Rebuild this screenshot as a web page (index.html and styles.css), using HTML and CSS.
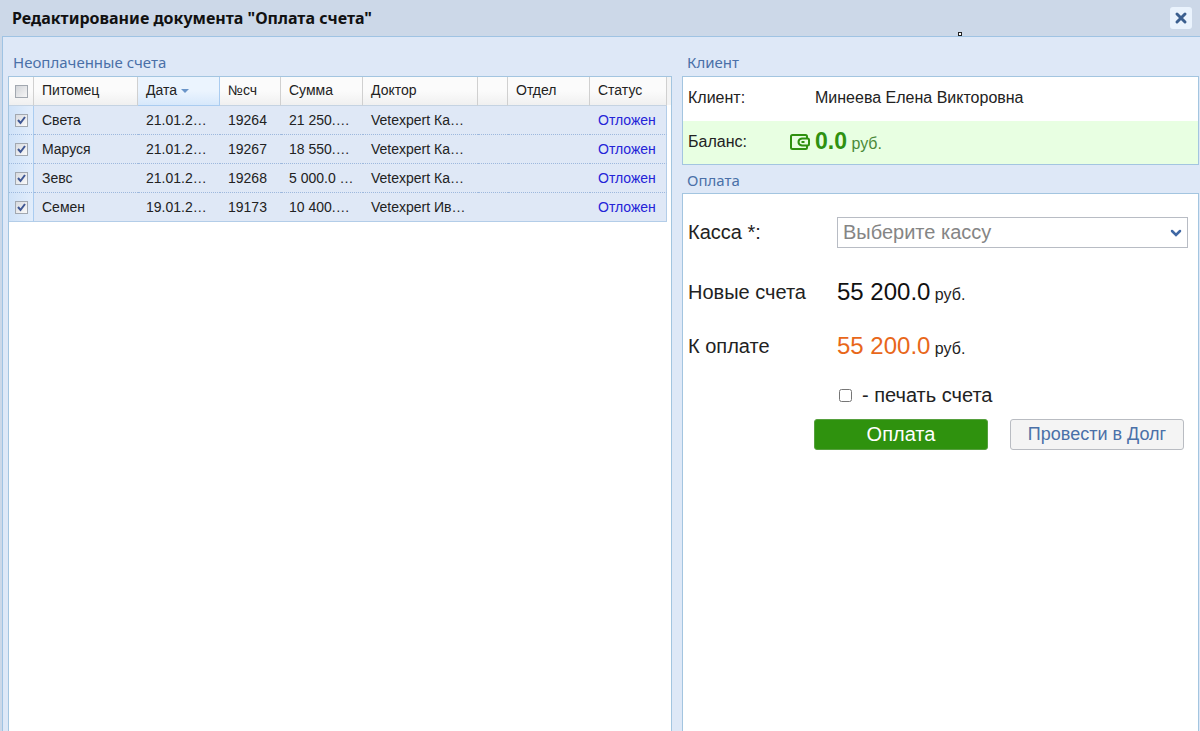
FILE: index.html
```html
<!DOCTYPE html>
<html lang="ru">

<head>
  <meta charset="UTF-8">
  <meta name="viewport" content="width=device-width, initial-scale=1.0">
  <title>Оплата счета</title>
  <link rel="stylesheet" href="styles.css">
</head>

<body>

  <div class="window">
    <header class="window-header">
      <h1>Редактирование документа "Оплата счета"</h1>
      <button class="close" type="button" aria-label="Закрыть">
        <svg width="14" height="14" viewBox="0 0 14 14"><path d="M3 3L11 11M11 3L3 11" stroke="#3b5f8f" stroke-width="3" stroke-linecap="round"/></svg>
      </button>
      <span class="marker"></span>
    </header>

    <main class="window-body">
      <!-- Неоплаченные счета -->
      <section class="column">
        <h2>Неоплаченные счета</h2>
        <div class="panel bills">
          <table>
            <thead>
              <tr>
                <th class="col-check"><input type="checkbox" class="check" aria-label="Выбрать все"></th>
                <th class="col-pet">Питомец</th>
                <th class="col-date sorted">Дата<svg width="8" height="4" viewBox="0 0 8 4"><path d="M0 0H8L4 4Z" fill="#6a95c9"/></svg></th>
                <th class="col-num">№сч</th>
                <th class="col-sum">Сумма</th>
                <th class="col-doctor">Доктор</th>
                <th class="col-empty"></th>
                <th class="col-dept">Отдел</th>
                <th class="col-status">Статус</th>
              </tr>
            </thead>
            <tbody>
              <tr>
                <td><input type="checkbox" class="check" aria-label="Света" checked></td>
                <td>Света</td>
                <td>21.01.2…</td>
                <td>19264</td>
                <td>21 250.…</td>
                <td>Vetexpert Ка…</td>
                <td></td>
                <td></td>
                <td class="status">Отложен</td>
              </tr>
              <tr>
                <td><input type="checkbox" class="check" aria-label="Маруся" checked></td>
                <td>Маруся</td>
                <td>21.01.2…</td>
                <td>19267</td>
                <td>18 550.…</td>
                <td>Vetexpert Ка…</td>
                <td></td>
                <td></td>
                <td class="status">Отложен</td>
              </tr>
              <tr>
                <td><input type="checkbox" class="check" aria-label="Зевс" checked></td>
                <td>Зевс</td>
                <td>21.01.2…</td>
                <td>19268</td>
                <td>5 000.0 …</td>
                <td>Vetexpert Ка…</td>
                <td></td>
                <td></td>
                <td class="status">Отложен</td>
              </tr>
              <tr>
                <td><input type="checkbox" class="check" aria-label="Семен" checked></td>
                <td>Семен</td>
                <td>19.01.2…</td>
                <td>19173</td>
                <td>10 400.…</td>
                <td>Vetexpert Ив…</td>
                <td></td>
                <td></td>
                <td class="status">Отложен</td>
              </tr>
            </tbody>
          </table>
        </div>
      </section>

      <section class="column">
        <!-- Клиент -->
        <h2>Клиент</h2>
        <div class="panel client">
          <div class="client-row">
            <span class="client-label">Клиент:</span>
            <span>Минеева Елена Викторовна</span>
          </div>
          <div class="client-row balance">
            <span class="client-label">Баланс:</span>
            <svg class="wallet" width="20" height="18" viewBox="0 0 20 18" fill="none" stroke="#2f9110" stroke-width="2">
              <path d="M17 5V3.500Q17 2 15.500 2H2.500Q1 2 1 3.500V14.500Q1 16 2.500 16H15.500Q17 16 17 14.500V13"/>
              <path d="M12 5.500H17.500Q19 5.500 19 7V11Q19 12.500 17.500 12.500H12Q8.500 12 8.500 9T12 5.500Z"/>
              <path d="M11.500 9H14.500"/>
            </svg>
            <span class="balance-sum"><b>0.0</b> руб.</span>
          </div>
        </div>

        <!-- Оплата -->
        <h2 class="pay-title">Оплата</h2>
        <form class="panel pay">
          <div class="pay-row cash">
            <label for="cash">Касса *:</label>
            <div class="select">
              <select id="cash">
                <option>Выберите кассу</option>
              </select>
              <svg width="12" height="8" viewBox="0 0 12 8"><path d="M2 2L6 6L10 2" fill="none" stroke="#4068a4" stroke-width="2.500" stroke-linecap="round"/></svg>
            </div>
          </div>
          <div class="pay-row">
            <span>Новые счета</span>
            <span class="amount"><span class="sum">55 200.0</span> руб.</span>
          </div>
          <div class="pay-row">
            <span>К оплате</span>
            <span class="amount"><span class="sum due">55 200.0</span> руб.</span>
          </div>
          <div class="print">
            <input type="checkbox" id="print">
            <label for="print">- печать счета</label>
          </div>
          <div class="actions">
            <button type="button" class="btn btn-pay">Оплата</button>
            <button type="button" class="btn btn-debt">Провести в Долг</button>
          </div>
        </form>
      </section>
    </main>
  </div>

</body>

</html>
```
FILE: styles.css
```css
* {
  box-sizing: border-box;
}

body {
  margin: 0;
  font-family: "Liberation Sans", Arial, sans-serif;
  font-size: 14px;
  color: #222;
  background-color: #ccd8e8;
}

.window {
  display: flex;
  flex-direction: column;
  min-height: 100vh;
  padding-left: 2px;
}

.window-header {
  position: relative;
  display: flex;
  align-items: center;
  justify-content: space-between;
  height: 36px;
  padding: 0 8px 0 10px;
}

h1,
h2 {
  margin: 0;
  font-family: "Noto Sans", Tahoma, sans-serif;
}

h1 {
  font-size: 16px;
  line-height: 32px;
  color: #111;
}

h2 {
  height: 39px;
  padding: 15px 5px 0;
  font-size: 15px;
  font-weight: normal;
  line-height: 20px;
  color: #4a70a8;
}

.close {
  display: flex;
  align-items: center;
  justify-content: center;
  width: 22px;
  height: 22px;
  padding: 0;
  border: none;
  border-radius: 3px;
  background-color: #eaf3fd;
  cursor: pointer;
}

.marker {
  position: absolute;
  left: 956px;
  top: 32px;
  z-index: 1;
  width: 4px;
  height: 4px;
  border: 1px solid #222;
  background-color: #fff;
}

.window-body {
  flex: 1;
  display: grid;
  grid-template-columns: 664fr 517fr;
  gap: 10px;
  padding: 0 1px 0 5px;
  border-top: 1px solid #9fc3e3;
  border-left: 1px solid #9fc3e3;
  background-color: #dee8f7;
}

.column {
  display: flex;
  flex-direction: column;
}

.panel {
  border: 1px solid #a3c5e0;
  background-color: #fff;
}

.bills {
  flex: 1;
  padding-right: 4px;
  border-bottom: none;
  background: linear-gradient(#f4f4f4, #f4f4f4) no-repeat 0 0 / 100% 28px, #fff;
}

table {
  width: 100%;
  table-layout: fixed;
  border-collapse: separate;
  border-spacing: 0;
}

th {
  height: 29px;
  padding: 0 8px 2px;
  border-right: 1px solid #d0d0d0;
  border-bottom: 1px solid #c5d3e2;
  background: linear-gradient(#fbfbfb 50%, #f0f0f0);
  font-weight: normal;
  text-align: left;
}

th.sorted {
  background: linear-gradient(#ebf4fe 50%, #d7e8fb);
  border-color: #aaccf0;
}

th svg {
  margin-left: 4px;
  vertical-align: 2px;
}

td {
  height: 29px;
  padding: 0 8px;
  border-bottom: 1px dotted #9db8dd;
  background-color: #dfe8f6;
  white-space: nowrap;
}

tr:last-child td {
  border-bottom: 1px solid #b3cde8;
}

td:last-child {
  border-right: 1px solid #b3cde8;
}

th:first-child,
td:first-child {
  padding: 0 0 0 6px;
}

td:first-child {
  border-right: 1px solid #aaccf0;
  background: linear-gradient(90deg, #cfe2f8, #e2edfb);
}

.col-check { width: 25px; }
.col-pet { width: 104px; }
.col-date { width: 82px; }
.col-num { width: 61px; }
.col-sum { width: 82px; }
.col-doctor { width: 115px; }
.col-empty { width: 30px; }
.col-dept { width: 82px; }

.status {
  color: #2424d8;
}

.check {
  display: block;
  appearance: none;
  width: 13px;
  height: 13px;
  margin: 0;
  border: 1px solid #a2a8b0;
  background: linear-gradient(135deg, #d2d5d9, #f6f6f6);
}

.check:checked {
  background: url("data:image/svg+xml,%3Csvg xmlns='http://www.w3.org/2000/svg' viewBox='0 0 11 11'%3E%3Cpath d='M2 5L4.500 8L9 2' fill='none' stroke='%233f5794' stroke-width='2'/%3E%3C/svg%3E"), linear-gradient(135deg, #d8dbe0, #fafafa);
}

.client-row {
  display: flex;
  align-items: center;
  height: 44px;
  padding: 0 5px 2px;
  font-size: 16px;
}

.client-label {
  width: 127px;
}

.balance {
  height: 43px;
  background-color: #e8ffe2;
  color: #4b8a38;
}

.balance .client-label {
  width: 102px;
  color: #222;
}

.balance-sum {
  padding-left: 5px;
}

.balance-sum b {
  font-size: 23px;
  color: #2f9110;
}

.pay-title {
  height: 28px;
  padding-top: 5px;
}

.pay {
  flex: 1;
  padding: 16px 10px 0 5px;
  border-bottom: none;
  font-size: 20px;
}

.pay-row {
  display: grid;
  grid-template-columns: 149px 1fr;
  align-items: center;
  height: 54px;
}

.cash {
  height: 44px;
  margin-bottom: 11px;
}

.select {
  position: relative;
}

.select select {
  display: block;
  appearance: none;
  width: 100%;
  height: 31px;
  padding: 0 5px;
  border: 1px solid #b8bcc4;
  border-radius: 0;
  background-color: #fff;
  color: #858585;
  font: inherit;
}

.select svg {
  position: absolute;
  right: 6px;
  top: 12px;
  pointer-events: none;
}

.amount {
  font-size: 16px;
}

.sum {
  font-size: 24px;
  color: #111;
}

.sum.due {
  color: #e8671a;
}

.print {
  display: flex;
  align-items: center;
  gap: 10px;
  height: 44px;
  padding-left: 151px;
}

.print input {
  width: 13px;
  height: 13px;
  margin: 0;
}

.actions {
  display: grid;
  grid-template-columns: 1fr 1fr;
  gap: 22px;
  padding: 2px 4px 0 126px;
}

.btn {
  height: 31px;
  padding: 0;
  border-radius: 3px;
  font-family: inherit;
  cursor: pointer;
}

.btn-pay {
  border: 1px solid #56a03e;
  background-color: #2f920e;
  color: #fff;
  font-size: 20px;
}

.btn-debt {
  border: 1px solid #b9bcc2;
  background-color: #f4f4f4;
  color: #4a70a8;
  font-size: 18px;
}
```
